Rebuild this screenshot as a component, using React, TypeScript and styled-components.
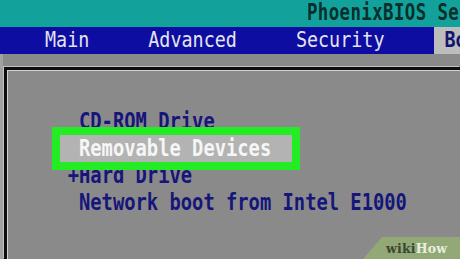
import React from 'react';
import styled, { createGlobalStyle, css } from 'styled-components';

const GlobalStyle = createGlobalStyle`
  html, body {
    margin: 0;
    padding: 0;
    width: 460px;
    height: 259px;
    overflow: hidden;
    background: #8a8a8a;
  }
  #root {
    width: 100%;
    height: 100%;
  }
`;

const Screen = styled.div`
  position: relative;
  width: 460px;
  height: 259px;
  display: flex;
  flex-direction: column;
  overflow: hidden;
  background: #8a8a8a;
`;

// BIOS glyphs are tall and narrow, so stretch a mono font upward from its baseline
const Glyphs = styled.span<{ $size: number; $stretch: number; $bold?: boolean; $track?: number }>`
  display: inline-block;
  font-family: "DejaVu Sans Mono", "Liberation Mono", monospace;
  font-size: ${(p) => p.$size}px;
  font-weight: ${(p) => (p.$bold ? 700 : 400)};
  letter-spacing: ${(p) => p.$track ?? 0}px;
  line-height: 1;
  white-space: pre;
  transform: scaleY(${(p) => p.$stretch});
  transform-origin: 0 0.846em;
`;

const TitleBar = styled.div`
  height: 27px;
  box-sizing: border-box;
  padding: 6px 0 0 307px;
  background: #12a29b;
  color: #082f2c;
  white-space: nowrap;
  overflow: hidden;
`;

const MenuBar = styled.div`
  display: flex;
  height: 27px;
  padding-left: 45px;
  gap: 59px;
  background: #0d0da2;
  overflow: hidden;
`;

const MenuItem = styled.div<{ $active?: boolean }>`
  padding-top: 5px;
  color: #e4e4ee;
  white-space: nowrap;

  ${(p) =>
    p.$active &&
    css`
      flex: 1;
      margin-left: -9px;
      padding-left: 10px;
      background: #bdbdbd;
      color: #14146e;
    `}
`;

const Body = styled.div`
  flex: 1;
  display: flex;
  padding: 13px 0 0 4px;
  box-shadow: inset 3px 0 0 #a2a2a2;
`;

const Frame = styled.div`
  flex: 1;
  display: flex;
  flex-direction: column;
  align-items: flex-start;
  padding: 38px 0 0 72px;
  border-top: 3px solid #0e0e0e;
  border-left: 3px solid #0e0e0e;
  box-shadow: inset 1px 1px 0 #d2d2d2, -1px -1px 0 #c2c2c2;
`;

const Line = styled.div<{ $selected?: boolean }>`
  height: 27px;
  box-sizing: border-box;
  padding-top: 6px;
  color: #15157a;

  ${(p) =>
    p.$selected &&
    css`
      position: relative;
      z-index: 1;
      margin-left: -19px;
      padding: 6px 21px 0 19px;
      background: #b3b3b3;
      color: #f6f6f6;
      outline: 8px solid #24ec24;
    `}
`;

const Marker = styled.span`
  margin-left: -1ch;
`;

const Watermark = styled.div`
  position: absolute;
  right: 0;
  bottom: 0;
  width: 97px;
  height: 22px;
  box-sizing: border-box;
  padding: 1px 0 0 23px;
  background: #93a877;
  clip-path: polygon(19px 0, 100% 0, 100% 100%, 0 100%);
  font-family: "DejaVu Serif", "Liberation Serif", serif;
  font-weight: 700;
  font-size: 12.5px;
  line-height: 22px;
  letter-spacing: 0.2px;
`;

const Wiki = styled.span`
  color: #3b4631;
`;

const How = styled.span`
  color: #e8efdc;
`;

const menu = ['Main', 'Advanced', 'Security', 'Boot'];

const bootOrder = [
  { label: 'CD-ROM Drive' },
  { label: 'Removable Devices', selected: true },
  { label: 'Hard Drive', expandable: true },
  { label: 'Network boot from Intel E1000' },
];

export default function App() {
  return (
    <>
      <GlobalStyle />
      <Screen>
        <TitleBar>
          <Glyphs $size={17.4} $stretch={1.3} $track={0.4} $bold>
            PhoenixBIOS Setup Utility
          </Glyphs>
        </TitleBar>
        <MenuBar>
          {menu.map((m) => (
            <MenuItem key={m} $active={m === 'Boot'}>
              <Glyphs $size={18.4} $stretch={1.2} $bold={m === 'Boot'}>
                {m}
              </Glyphs>
            </MenuItem>
          ))}
        </MenuBar>
        <Body>
          <Frame>
            {bootOrder.map((item) => (
              <Line key={item.label} $selected={item.selected}>
                <Glyphs $size={18.8} $stretch={1.2} $bold>
                  {item.expandable && <Marker>+</Marker>}
                  {item.label}
                </Glyphs>
              </Line>
            ))}
          </Frame>
        </Body>
        <Watermark>
          <Wiki>wiki</Wiki>
          <How>How</How>
        </Watermark>
      </Screen>
    </>
  );
}
